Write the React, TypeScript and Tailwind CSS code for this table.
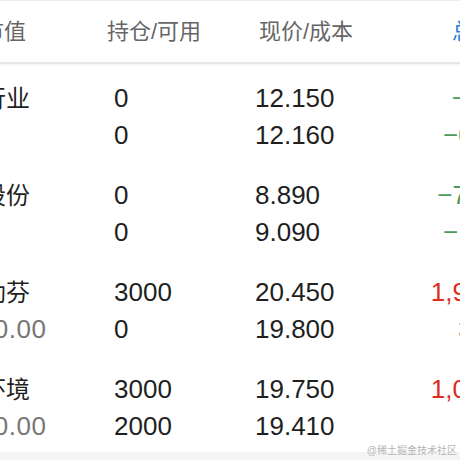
const rows = [
  { name: "建设行业", value: "", qty: "0", avail: "0", price: "12.150", cost: "12.160", pl: "−15.00", ratio: "−0.08%", up: false },
  { name: "中天股份", value: "", qty: "0", avail: "0", price: "8.890", cost: "9.090", pl: "−720.00", ratio: "−1.10%", up: false },
  { name: "迪安劲芬", value: "61350.00", qty: "3000", avail: "0", price: "20.450", cost: "19.800", pl: "1,950.00", ratio: "3.28%", up: true },
  { name: "洪城环境", value: "59250.00", qty: "3000", avail: "2000", price: "19.750", cost: "19.410", pl: "1,020.00", ratio: "1.75%", up: true },
];

export default function App() {
  return (
    <div
      className="relative h-[460px] w-[460px] overflow-hidden bg-[#f4f4f4]"
      style={{ fontFamily: '"Liberation Sans", "Noto Sans CJK SC", sans-serif' }}
    >
      <div className="bg-white">
        {/* header */}
        <div className="border-t border-[#ececec] border-b-2 border-b-[#e6e6e6] shadow-[0_2px_0_#f7f7f7]">
          <div className="ml-[-68px] flex h-[61px] w-[620px] items-center text-[22px] text-[#666]">
            <div className="w-[175px]">名称/市值</div>
            <div className="w-[152px]">持仓/可用</div>
            <div className="w-[193px]">现价/成本</div>
            <div className="text-[#2a7fd6]">总盈亏</div>
          </div>
        </div>

        {/* rows */}
        <div className="ml-[-66px] w-[640px]">
          {rows.map((r) => (
            <div key={r.name} className="flex pt-[16px] pb-[7px] leading-[37px]">
              <div className="flex w-[180px] flex-col">
                <span className="text-[24px] text-[#1f1f1f]">{r.name}</span>
                <span className="h-[37px] text-[26px] tracking-[0.5px] text-[#777]">{r.value}</span>
              </div>
              <div className="flex w-[141px] flex-col text-[26px] text-[#1f1f1f]">
                <span>{r.qty}</span>
                <span>{r.avail}</span>
              </div>
              <div className="flex w-[150px] flex-col text-[26px] text-[#1f1f1f]">
                <span>{r.price}</span>
                <span>{r.cost}</span>
              </div>
              <div
                className={
                  r.up
                    ? "flex w-[127px] flex-col items-end text-[26px] text-[#dd2c1c]"
                    : "flex w-[127px] flex-col items-end text-[26px] text-[#4a9a5e]"
                }
              >
                <span className="whitespace-nowrap">{r.pl}</span>
                <span className="whitespace-nowrap">{r.ratio}</span>
              </div>
            </div>
          ))}
        </div>
      </div>

      {/* watermark */}
      <div className="absolute right-[3px] bottom-[4px] text-[10px] leading-none text-[#b4b4b4]">
        @稀土掘金技术社区
      </div>
    </div>
  );
}
